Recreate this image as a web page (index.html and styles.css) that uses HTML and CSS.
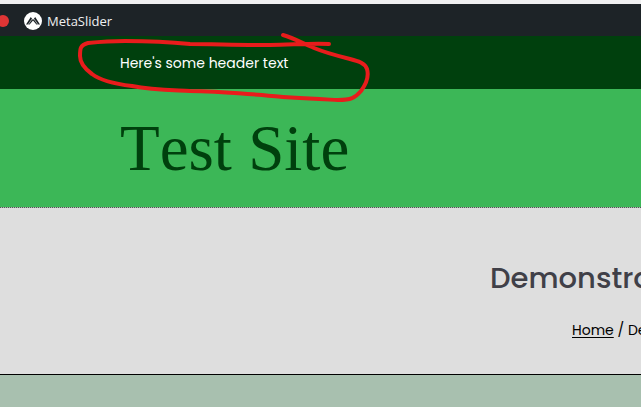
FILE: index.html
```
<!DOCTYPE html>
<html lang="en">
<head>
    <meta charset="UTF-8">
    <meta name="viewport" content="width=device-width, initial-scale=1.0">
    <title>Test Site</title>
    <link rel="stylesheet" href="styles.css">
</head>
<body>
    <div class="admin-bar">
        <span class="status-dot"></span>
        <svg class="slider-icon" viewBox="0 0 18 18" aria-hidden="true">
            <circle cx="9" cy="9" r="9" fill="#fff"/>
            <path d="M2 12.5 L6.8 5 L9 8 L11.2 5 L16 12.5 H12.4 L9 8.4 L5.6 12.5 Z" fill="#1d2327"/>
            <path d="M4 12.8 L8 7 M14 12.8 L10 7" fill="none" stroke="#fff" stroke-width=".6"/>
        </svg>
        <span>MetaSlider</span>
    </div>

    <div class="top-header">
        <p class="header-text">Here's some header text</p>
        <!-- Red marker line around the header text -->
        <svg class="marker" width="300" height="76" viewBox="74 30 300 76" aria-hidden="true">
            <path d="M329 44 C310 43 290 45 270 45 C240 45 210 44 190 44 C160 41 145 41 125 41 C108 41 98 42 88 43 C80 45 80 49 80 56 C80 63 85 69 92 74 C101 81 116 84 132 86 C152 90 170 90 190 91 C215 91 235 93 262 95 C290 98 317 99 338 100 C351 100 355 98 361 91 C367 83 369 76 367 69 C365 63 358 61 350 59 C338 56 326 53 314 48 C304 44 294 38 283 35"/>
        </svg>
    </div>

    <header class="site-header">
        <h1 class="site-title">Test Site</h1>
    </header>

    <section class="page-header">
        <h2 class="page-title">Demonstration</h2>
        <nav class="breadcrumbs">
            <a href="#">Home</a> / Demonstration
        </nav>
    </section>

    <main class="content"></main>
</body>
</html>
```

FILE: styles.css
```
* {
    box-sizing: border-box;
}
body {
    display: flex;
    flex-direction: column;
    min-height: 100vh;
    margin: 0;
    font-family: Poppins, Inter, sans-serif;
    font-size: 14px;
    line-height: 24px;
    color: #000;
    background-color: #a8c0af;
}
.admin-bar {
    display: flex;
    align-items: center;
    height: 36px;
    padding-top: 1px;
    border-top: 4px solid #f0f0f1;
    font-family: "Segoe UI", "Open Sans", sans-serif;
    font-size: 13px;
    color: #f0f0f1;
    background-color: #1d2327;
}
.status-dot {
    width: 12px;
    height: 12px;
    margin-left: -3px;
    border-radius: 50%;
    background-color: #e03535;
}
.slider-icon {
    width: 18px;
    height: 18px;
    margin: 0 5px 0 15px;
}
.top-header {
    position: relative;
    padding: 15px 120px 14px;
    color: #fff;
    background-color: #00400d;
}
.header-text {
    margin: 0;
}
.marker {
    position: absolute;
    top: -6px;
    left: 74px;
    fill: none;
    stroke: #e81c1c;
    stroke-width: 4px;
    stroke-linecap: round;
    stroke-linejoin: round;
}
.site-header {
    padding: 24px 120px;
    border-bottom: 1px dotted #555;
    background-color: #3cb757;
    background-clip: padding-box;
}
.site-title {
    margin: 0;
    font-family: Georgia, "Liberation Serif", serif;
    font-size: 65px;
    font-weight: 400;
    font-kerning: none;
    line-height: 70px;
    color: #00400d;
}
.page-header {
    padding: 50px 0 32px 490px;
    border-bottom: 1px solid #000;
    overflow: hidden;
    white-space: nowrap;
    background-color: #dedede;
}
.page-title {
    margin: 0 0 20px;
    font-size: 29px;
    font-weight: 500;
    line-height: 40px;
    color: #404048;
}
.breadcrumbs {
    padding-left: 82px;
}
.breadcrumbs a {
    color: #000;
    text-underline-offset: 2px;
}
.content {
    flex: 1;
}
```
